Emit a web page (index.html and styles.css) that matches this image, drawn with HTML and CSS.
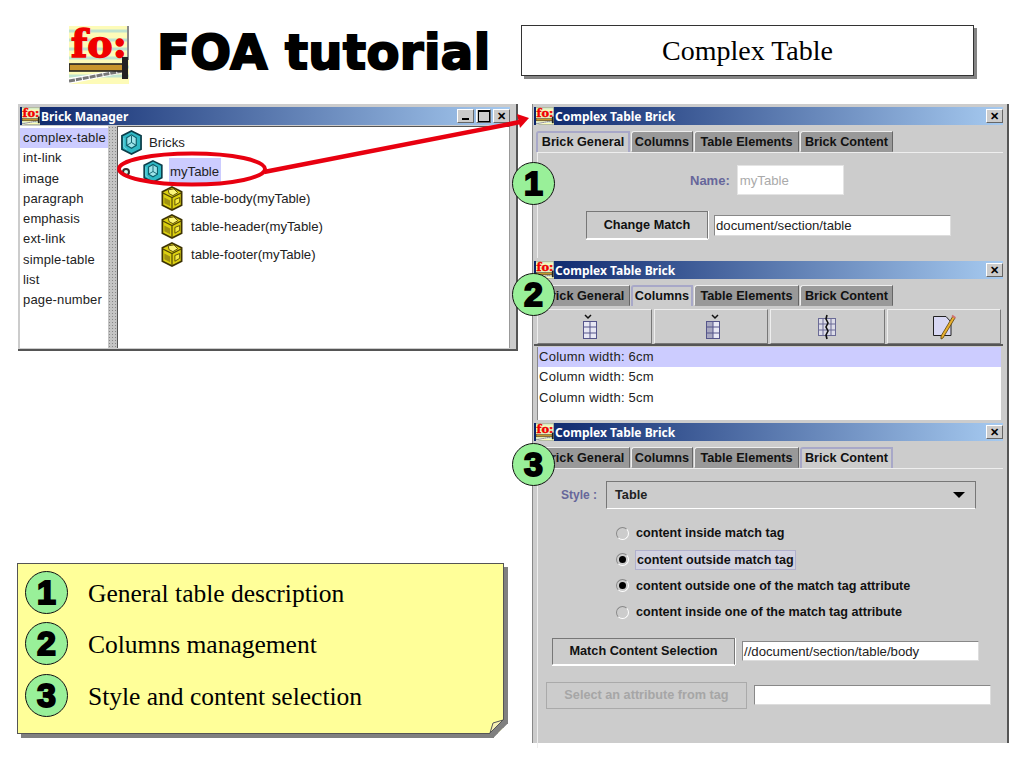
FILE: index.html
```html
<!DOCTYPE html>
<html lang="en">
<head>
<meta charset="utf-8">
<title>FOA tutorial - Complex Table</title>
<link rel="stylesheet" href="styles.css">
</head>
<body>
<svg class="defs" width="0" height="0" aria-hidden="true">
  <defs>
    <symbol id="fo" viewBox="0 0 60 58">
      <rect width="60" height="58" fill="#fdfbb8"/>
      <path d="M0 5h60M0 14h60M0 23h60M0 32h60M0 41h60M0 50h60" stroke="#bfe3cf" stroke-width="3"/>
      <rect x="58" width="2" height="34" fill="#8a8a8a"/>
      <text x="2" y="31" class="fo-text">fo:</text>
      <path d="M0 52 L54 43 L54 47 L0 58Z" fill="#fff"/>
      <path d="M0 55 L54 45" stroke="#777" stroke-width="3" stroke-dasharray="6 1"/>
      <rect x="0" y="38" width="54" height="7" fill="#c8952c" stroke="#222" stroke-width="1.6"/>
      <rect x="53" y="31" width="6" height="22" fill="#222"/>
    </symbol>
    <symbol id="cube-c" viewBox="0 0 22 26">
      <path d="M11 1 L21 6 V20 L11 25 L1 20 V6Z" fill="#2fb8c4" stroke="#0a3c48" stroke-width="1.8"/>
      <path d="M6 8 L11 5 L16 8 V16 L11 19 L6 16Z" fill="#9fe4ea" stroke="#0c5e6a" stroke-width="1.2"/>
      <path d="M6 16 L11 13 L16 16 M11 13 V6" fill="none" stroke="#0c5e6a"/>
      <path d="M3 8 V18 L6 20" fill="none" stroke="#7fdce6"/>
    </symbol>
    <symbol id="cube-y" viewBox="0 0 22 26">
      <path d="M11 1 L21 6 V20 L11 25 L1 20 V6Z" fill="#dcd010" stroke="#3e3404" stroke-width="1.8"/>
      <path d="M1 7 L11 12 L21 7 M11 12 V25" fill="none" stroke="#4e4206" stroke-width="1.2"/>
      <path d="M7 4 L13 3 L17 7 L12 10 L8 8Z" fill="#fbf57a" stroke="#5e5008"/>
      <path d="M3 12 L9 15 V21 L3 18Z" fill="#a09210"/>
      <path d="M14 14 L19 12 V17 L14 20Z" fill="#f4ea40" stroke="#5e5008"/>
    </symbol>
    <symbol id="col-left" viewBox="0 0 18 26">
      <path d="M4 1 L7 4 L10 1" fill="none" stroke="#111" stroke-width="1.5"/>
      <rect x="2.5" y="7.5" width="13" height="17" fill="#e8e8f4" stroke="#55558a"/>
      <path d="M9 8v16M3 13h12M3 19h12" stroke="#55558a"/>
    </symbol>
    <symbol id="col-right" viewBox="0 0 18 26">
      <path d="M8 1 L11 4 L14 1" fill="none" stroke="#111" stroke-width="1.5"/>
      <rect x="2.5" y="7.5" width="13" height="17" fill="#e8e8f4" stroke="#55558a"/>
      <rect x="3" y="8" width="6" height="16" fill="#a8a8c0"/>
      <path d="M9 8v16M3 13h12M3 19h12" stroke="#55558a"/>
    </symbol>
    <symbol id="col-split" viewBox="0 0 20 26">
      <rect x="1.5" y="4.5" width="17" height="17" fill="#dcdce8" stroke="#6a6a96"/>
      <path d="M6 5v16M14 5v16M2 10h16M2 16h16" stroke="#6a6a96"/>
      <path d="M10 1 L9 5 L11 9 L9 13 L11 17 L9 21 L10 25" fill="none" stroke="#111" stroke-width="1.6"/>
    </symbol>
    <symbol id="col-edit" viewBox="0 0 24 26">
      <path d="M1.5 2.5 H14 L19 8 V21.5 H1.5Z" fill="#d8d8f4" stroke="#222"/>
      <path d="M21 2 L23 4 L11 24 L9 25 L9 22Z" fill="#e8b030" stroke="#5a4008" stroke-width=".8"/>
      <path d="M20 1.5 L23.5 4" stroke="#d07070" stroke-width="2"/>
    </symbol>
  </defs>
</svg>

<main class="slide">
  <svg class="logo" width="60" height="58"><use href="#fo"/></svg>
  <h1 class="title">FOA tutorial</h1>
  <div class="title-box">Complex Table</div>

  <section class="win manager">
    <header class="bar">
      <svg class="bar-icon" width="18" height="18"><use href="#fo"/></svg>
      <span class="bar-title">Brick Manager</span>
      <span class="ctl ctl-min"></span><span class="ctl ctl-max"></span><span class="ctl ctl-x">✕</span>
    </header>
    <div class="split">
      <ul class="bricks">
        <li class="sel">complex-table</li><li>int-link</li><li>image</li><li>paragraph</li><li>emphasis</li><li>ext-link</li><li>simple-table</li><li>list</li><li>page-number</li>
      </ul>
      <div class="divider"></div>
      <div class="tree">
        <div class="node root"><svg class="cube-big" width="21" height="25"><use href="#cube-c"/></svg><span>Bricks</span></div>
        <div class="node table">
          <span class="handle"></span>
          <svg class="cube-mid" width="20" height="23"><use href="#cube-c"/></svg>
          <span class="hl">myTable</span>
        </div>
        <div class="node leaf"><svg width="22" height="25"><use href="#cube-y"/></svg><span>table-body(myTable)</span></div>
        <div class="node leaf"><svg width="22" height="25"><use href="#cube-y"/></svg><span>table-header(myTable)</span></div>
        <div class="node leaf"><svg width="22" height="25"><use href="#cube-y"/></svg><span>table-footer(myTable)</span></div>
      </div>
    </div>
  </section>

  <section class="win brick w1">
    <header class="bar">
      <svg class="bar-icon" width="18" height="18"><use href="#fo"/></svg>
      <span class="bar-title">Complex Table Brick</span>
      <span class="ctl ctl-x">✕</span>
    </header>
    <nav class="tabs">
      <span class="tab t1 on">Brick General</span><span class="tab t2">Columns</span><span class="tab t3">Table Elements</span><span class="tab t4">Brick Content</span>
    </nav>
    <div class="panel general">
      <div class="name-row"><label class="lbl">Name:</label><span class="field ghost">myTable</span></div>
      <div class="match-row"><span class="btn change">Change Match</span><span class="field path1">document/section/table</span></div>
    </div>
  </section>

  <section class="win brick w2">
    <header class="bar">
      <svg class="bar-icon" width="18" height="18"><use href="#fo"/></svg>
      <span class="bar-title">Complex Table Brick</span>
      <span class="ctl ctl-x">✕</span>
    </header>
    <nav class="tabs">
      <span class="tab t1">Brick General</span><span class="tab t2 on">Columns</span><span class="tab t3">Table Elements</span><span class="tab t4">Brick Content</span>
    </nav>
    <div class="tools">
      <span class="tool tool-first"><svg width="18" height="26"><use href="#col-left"/></svg></span>
      <span class="tool tool-second"><svg width="18" height="26"><use href="#col-right"/></svg></span>
      <span class="tool"><svg width="20" height="26"><use href="#col-split"/></svg></span>
      <span class="tool"><svg width="24" height="26"><use href="#col-edit"/></svg></span>
    </div>
    <ul class="cols">
      <li class="sel">Column width: 6cm</li><li>Column width: 5cm</li><li>Column width: 5cm</li>
    </ul>
  </section>

  <section class="win brick w3">
    <header class="bar">
      <svg class="bar-icon" width="18" height="18"><use href="#fo"/></svg>
      <span class="bar-title">Complex Table Brick</span>
      <span class="ctl ctl-x">✕</span>
    </header>
    <nav class="tabs">
      <span class="tab t1">Brick General</span><span class="tab t2">Columns</span><span class="tab t3">Table Elements</span><span class="tab t4 on">Brick Content</span>
    </nav>
    <div class="panel content">
      <div class="style-row"><label class="lbl lbl-style">Style :</label><div class="combo"><span>Table</span><i class="caret"></i></div></div>
      <div class="radios">
        <div class="radio"><i class="dot"></i><span>content inside match tag</span></div>
        <div class="radio"><i class="dot on"></i><span class="focus">content outside match tag</span></div>
        <div class="radio"><i class="dot on"></i><span>content outside one of the match tag attribute</span></div>
        <div class="radio"><i class="dot"></i><span>content inside one of the match tag attribute</span></div>
      </div>
      <div class="sel-row"><span class="btn mcs">Match Content Selection</span><span class="field path3">//document/section/table/body</span></div>
      <div class="attr-row"><span class="btn off">Select an attribute from tag</span><span class="field blank"></span></div>
    </div>
  </section>

  <aside class="legend">
    <div class="item"><span class="badge">1</span><span>General table description</span></div>
    <div class="item"><span class="badge">2</span><span>Columns management</span></div>
    <div class="item"><span class="badge">3</span><span>Style and content selection</span></div>
    <svg class="fold" width="20" height="20" viewBox="0 0 20 20">
      <path d="M5 19 L18 6 H20 V20 H5Z" fill="#fff"/>
      <path d="M1 15 L14 2 H18 V6 L5 19 H1Z" fill="#808080"/>
      <path d="M1 15 L4 5 L14 2Z" fill="#f6f0b4" stroke="#555"/>
    </svg>
  </aside>

  <svg class="callout" width="1024" height="768" viewBox="0 0 1024 768" aria-hidden="true">
    <ellipse cx="192" cy="169" rx="73" ry="15.5" fill="none" stroke="#e80010" stroke-width="4"/>
    <path d="M264 172 L520 122" stroke="#e80010" stroke-width="4.5"/>
    <path d="M529 118 L517 114 L520 128Z" fill="#e80010"/>
  </svg>

  <span class="badge over b1">1</span>
  <span class="badge over b2">2</span>
  <span class="badge over b3">3</span>
</main>
</body>
</html>
```
FILE: styles.css
```css
* { box-sizing: border-box; }
html, body { margin: 0; padding: 0; background: #fff; }
.defs { position: absolute; }
.slide { position: relative; width: 1024px; height: 768px; overflow: hidden; background: #fff; font-family: "Liberation Sans", Arial, sans-serif; }
.fo-text { font-family: "DejaVu Serif", serif; font-weight: 700; font-size: 38px; fill: #f00000; stroke: #f00000; stroke-width: 1.4px; }

.logo { position: absolute; left: 69px; top: 26px; }
.title { position: absolute; left: 157px; top: 22px; margin: 0; font: 700 48px/60px "DejaVu Sans", sans-serif; letter-spacing: .45px; color: #000; -webkit-text-stroke: 2px #000; white-space: nowrap; }
.title-box { position: absolute; left: 521px; top: 25px; width: 453px; height: 51px; display: flex; align-items: center; justify-content: center; border: 1px solid #333; background: #fff; box-shadow: 3px 3px 0 #858585; font: 28px "Liberation Serif", serif; color: #000; }

/* Windows */
.win { position: absolute; background: #ccc; border-right: 2px solid #555; font-size: 13px; color: #222; }
.manager { left: 18px; top: 104px; width: 500px; height: 247px; border-bottom: 2px solid #555; padding: 3px 6px 0 2px; }
.brick { left: 532px; width: 477px; padding: 3px 4px 0 1px; border-left: 1px solid #888; }
.w1 { top: 104px; height: 155px; }
.w2 { top: 258px; height: 164px; }
.w3 { top: 420px; height: 323px; }
.bar { display: flex; align-items: center; height: 18px; background: linear-gradient(90deg, #0a246a, #a6caf0); }
.bar-icon { margin: 0 1px 0 2px; flex: none; }
.bar-title { flex: 1; color: #fff; font: 700 12px "Noto Sans", sans-serif; }
.ctl { width: 17px; height: 14px; margin-right: 2px; display: flex; align-items: center; justify-content: center; background: #ccc; border: 1px solid; border-color: #fff #666 #666 #fff; color: #000; font-size: 11px; font-weight: 700; }
.ctl-min::after { content: ""; width: 7px; height: 2px; background: #000; margin-top: 6px; }
.ctl-max { width: 15px; }
.ctl-max::after { content: ""; width: 10px; height: 9px; border: 1px solid #000; border-top-width: 2px; }
.ctl-x { margin-right: 0; }

/* Brick manager */
.split { display: flex; height: 222px; margin-top: 1px; }
.bricks { list-style: none; margin: 0; padding: 2px 0 0; width: 88px; background: #fff; }
.bricks li { height: 20.3px; line-height: 20px; padding-left: 3px; white-space: nowrap; font-size: 13px; letter-spacing: .15px; }
.bricks li.sel { background: #ccccff; }
.divider { width: 10px; background: #c4c4c4 radial-gradient(circle, #888 .7px, transparent .9px) 0 0 / 3px 3px; border-right: 1px solid #555; }
.tree { flex: 1; background: #fff; border-top: 1px solid #555; border-right: 1px solid #999; padding-top: 3px; font-size: 13.2px; }
.node { display: flex; align-items: center; white-space: nowrap; }
.root { height: 25px; padding-left: 3px; gap: 7px; }
.table { height: 29px; margin-top: 2px; padding-left: 4px; }
.handle { width: 8px; height: 8px; border: 2px solid #333; border-radius: 50%; background: #cfe; }
.cube-mid { margin-left: 13px; }
.hl { margin-left: 6px; background: #ccccff; height: 27px; line-height: 27px; padding: 0 2px 0 1px; }
.leaf { height: 25px; margin-top: 3px; padding-left: 43px; gap: 8px; }
.table + .leaf { margin-top: 0; }

/* Tabs */
.tabs { display: flex; height: 21px; margin-top: 6px; padding-left: 2px; }
.tab { height: 21px; display: flex; align-items: center; justify-content: center; margin-right: 1px; background: #999; border: 1px solid; border-color: #eee #666 transparent #eee; border-radius: 3px 0 0 0; font-weight: 700; font-size: 12.7px; color: #111; white-space: nowrap; }
.tab.on { background: #ccc; border: 2px solid #a8a8c8; border-bottom: 0; padding-bottom: 2px; }
.t1 { width: 94px; }
.t2 { width: 62px; }
.t3 { width: 105px; }
.t4 { width: 93px; }

.panel { border-top: 1px solid #eee; border-left: 1px solid #eee; margin-left: 3px; }
.general { height: 108px; padding-top: 12px; }
.lbl { color: #66669a; font-weight: 700; font-size: 13px; }
.lbl-style { font-size: 12px; }
.field { display: flex; align-items: center; background: #fff; border: 1px solid #888; border-right-color: #ddd; border-bottom-color: #ddd; font-size: 13.2px; padding-left: 1px; white-space: nowrap; }
.name-row { display: flex; align-items: center; padding-left: 152px; gap: 7px; }
.ghost { width: 107px; height: 30px; padding-left: 2px; color: #aaa; border-color: #e4e4e4; }
.match-row { display: flex; align-items: center; padding-left: 48px; margin-top: 16px; gap: 6px; }
.btn { display: flex; align-items: center; justify-content: center; background: #ccc; border: 1px solid; border-color: #777 #777 #fff #777; box-shadow: 0 1px 0 #fff, 1px 0 0 #fff; font-weight: 700; font-size: 12.7px; color: #111; white-space: nowrap; }
.change { width: 122px; height: 28px; }
.path1 { width: 237px; height: 21px; }

/* Columns tab */
.tools { display: grid; grid-template-columns: repeat(4, 1fr); gap: 2px; height: 37px; margin: 3px 0 0; padding: 0 2px 0 3px; border-bottom: 2px solid #555; }
.tool { display: flex; align-items: center; justify-content: center; border: 1px solid; border-color: #eee #777 #777 #eee; }
.tool-first { padding-right: 8px; }
.tool-second { padding-left: 4px; }
.cols { list-style: none; margin: 1px 0 0 3px; padding: 0; height: 74px; width: 464px; background: #fff; border-left: 1px solid #888; }
.cols li { height: 20.3px; line-height: 20px; padding-left: 1px; letter-spacing: .02em; font-size: 13px; }
.cols li.sel { background: #ccccff; }

/* Content tab */
.content { height: 280px; padding-top: 12px; }
.style-row { display: flex; align-items: center; height: 28px; padding-left: 23px; gap: 9px; }
.combo { width: 370px; height: 28px; display: flex; align-items: center; justify-content: space-between; padding: 0 10px 0 8px; border: 1px solid; border-color: #777 #777 #fff #777; font-weight: 700; font-size: 12.7px; }
.caret { width: 0; height: 0; border: 6px solid transparent; border-top: 6px solid #000; border-bottom: 0; }
.radios { padding: 11px 0 0 78px; font-weight: 700; font-size: 12.6px; color: #111; }
.radio { display: flex; align-items: center; gap: 7px; height: 26.4px; }
.dot { width: 13px; height: 13px; border-radius: 50%; border: 1px solid #888; border-right-color: #fff; border-bottom-color: #fff; flex: none; display: flex; align-items: center; justify-content: center; }
.dot.on::after { content: ""; width: 7px; height: 7px; border-radius: 50%; background: #000; }
.focus { margin-left: -1px; padding: 2px 1px; background: #d2d2e0; border: 1px solid #b0b0cc; }
.sel-row { display: flex; align-items: center; margin-top: 12px; padding-left: 14px; gap: 7px; }
.mcs { width: 183px; height: 27px; }
.path3 { width: 237px; height: 20px; }
.attr-row { display: flex; align-items: center; margin-top: 17px; padding-left: 8px; gap: 7px; }
.off { width: 201px; height: 27px; color: #a6a6a6; border-color: #aaa; box-shadow: none; }
.blank { width: 237px; height: 20px; }

/* Legend */
.legend { position: absolute; left: 17px; top: 563px; width: 487px; height: 171px; padding: 7px 0 0 7px; background: #ffff99; border: 1px solid #555; box-shadow: 4px 4px 0 #808080; font: 25.5px "Liberation Serif", serif; color: #000; }
.item { display: flex; align-items: center; gap: 20px; height: 43px; margin-bottom: 8.4px; }
.item > span:last-child { padding-top: 3px; }
.fold { position: absolute; right: -6px; bottom: -5px; }
.badge { width: 43px; height: 43px; flex: none; display: flex; align-items: center; justify-content: center; border-radius: 50%; border: 1.5px solid #111; background: #99f099; color: #000; font: 700 34px "Liberation Sans", sans-serif; -webkit-text-stroke: 2px #000; }
.over { position: absolute; left: 512px; }
.b1 { top: 162px; }
.b2 { top: 273px; }
.b3 { top: 443px; }
.callout { position: absolute; left: 0; top: 0; pointer-events: none; }
```
